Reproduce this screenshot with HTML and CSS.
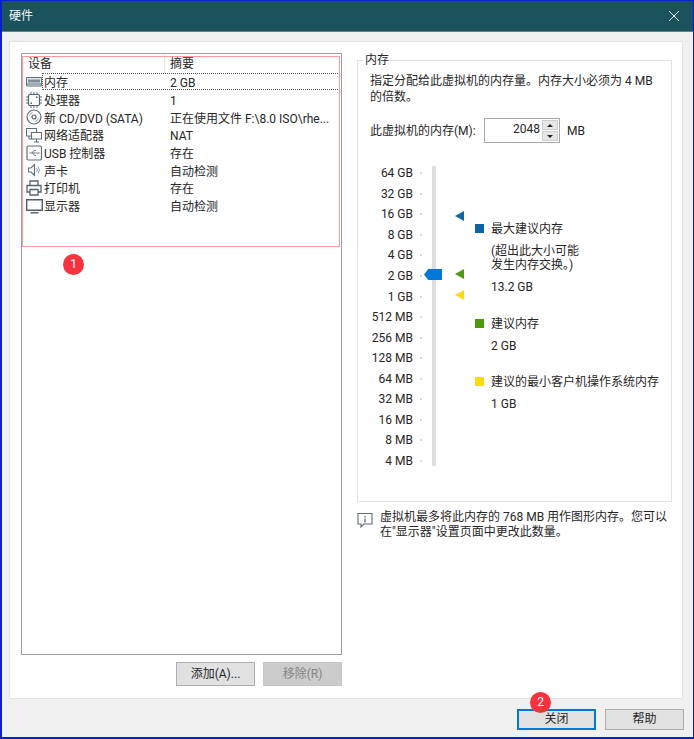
FILE: index.html
```html
<!DOCTYPE html>
<html lang="zh-CN">
<head>
    <meta charset="UTF-8">
    <title>硬件</title>
    <link rel="stylesheet" href="styles.css">
</head>
<body>
<div class="window">
    <div class="titlebar">
        <span>硬件</span>
        <svg class="close-x" width="12" height="12" viewBox="0 0 12 12"><path d="M1 1l10 10M11 1L1 11" stroke="#e8eeee" stroke-width="1" fill="none"/></svg>
    </div>

    <div class="panel">
        <div class="left">
            <div class="list">
                <div class="list-head">
                    <div class="head-name">设备</div>
                    <div class="head-sum">摘要</div>
                </div>
                <div class="row">
                    <svg class="ico" viewBox="0 0 16 16"><path d="M.5 3.500h15v8.500H.5z" fill="#e6e9eb" stroke="#5f6e7c"/><path d="M2 5.500h12v3H2z" fill="#7f8b97"/><path d="M1 10h14" stroke="#5f6e7c"/></svg>
                    <div class="cells focus"><span class="c-name">内存</span><span class="c-sum">2 GB</span></div>
                </div>
                <div class="row">
                    <svg class="ico" viewBox="0 0 16 16"><rect x="2.500" y="2.500" width="11" height="11" rx="1.500" fill="none" stroke="#4f5e6c" stroke-width="1.200"/><path d="M5 0v2.500M8 0v2.500M11 0v2.500M5 13.500V16M8 13.500V16M11 13.500V16M0 5h2.500M0 8h2.500M0 11h2.500M13.500 5H16M13.500 8H16M13.500 11H16" stroke="#5f6e7c"/><path d="M4.500 10.500h1.500V12H4.500zM10 4.500h1.500V6H10z" fill="#4f5e6c"/></svg>
                    <div class="cells"><span class="c-name">处理器</span><span class="c-sum">1</span></div>
                </div>
                <div class="row">
                    <svg class="ico" viewBox="0 0 16 16"><circle cx="8" cy="8" r="7" fill="none" stroke="#5f6e7c" stroke-width="1.200"/><circle cx="8" cy="8" r="2" fill="none" stroke="#4f5e6c" stroke-width="1.200"/><path d="M3.500 6.500a5 5 0 0 1 3-3M12.500 9.500a5 5 0 0 1-3 3" fill="none" stroke="#8c98a3"/></svg>
                    <div class="cells"><span class="c-name">新 CD/DVD (SATA)</span><span class="c-sum">正在使用文件 F:\8.0 ISO\rhe...</span></div>
                </div>
                <div class="row">
                    <svg class="ico" viewBox="0 0 16 16"><path d="M.5 1.500h10v7.500H.5z" fill="#fff" stroke="#5f6e7c" stroke-width="1.100"/><path d="M5.500 5.500h10v6.500h-10z" fill="#fff" stroke="#5f6e7c" stroke-width="1.100"/><path d="M10.500 12v3M8 15h5M3 9v3h2.500" fill="none" stroke="#5f6e7c"/></svg>
                    <div class="cells"><span class="c-name">网络适配器</span><span class="c-sum">NAT</span></div>
                </div>
                <div class="row">
                    <svg class="ico" viewBox="0 0 16 16"><rect x="1" y="1" width="14.500" height="14" rx="1.500" fill="none" stroke="#5f6e7c" stroke-width="1.200"/><path d="M3.500 8h9M6 8l2-2.500h2M6.500 8l2 2.500h1.500" fill="none" stroke="#6d7a86"/><path d="M12.500 7v2l1.500-1z" fill="#6d7a86"/></svg>
                    <div class="cells"><span class="c-name">USB 控制器</span><span class="c-sum">存在</span></div>
                </div>
                <div class="row">
                    <svg class="ico" viewBox="0 0 16 16"><path d="M2.500 6h2.500l3.500-3.500v11L5 10H2.500z" fill="none" stroke="#5f6e7c" stroke-width="1.100"/><path d="M10.500 6a3 3 0 0 1 0 4M12 4.500a5.500 5.500 0 0 1 0 7" fill="none" stroke="#8c98a3"/></svg>
                    <div class="cells"><span class="c-name">声卡</span><span class="c-sum">自动检测</span></div>
                </div>
                <div class="row">
                    <svg class="ico" viewBox="0 0 16 16"><path d="M4 5.500v-4.500h8v4.500M4 12H1V5.500h14V12h-3M4 9.500h8V15H4z" fill="none" stroke="#56646f" stroke-width="1.300"/></svg>
                    <div class="cells"><span class="c-name">打印机</span><span class="c-sum">存在</span></div>
                </div>
                <div class="row">
                    <svg class="ico ico-wide" viewBox="0 0 17 16"><path d="M.7 1.700h15.600v10.600H.7z" fill="#fff" stroke="#4f5e6c" stroke-width="1.400"/><path d="M4.500 14.800h8" stroke="#4f5e6c" stroke-width="1.400"/></svg>
                    <div class="cells"><span class="c-name">显示器</span><span class="c-sum">自动检测</span></div>
                </div>
            </div>
            <div class="list-buttons">
                <div class="btn">添加(A)...</div>
                <div class="btn btn-off">移除(R)</div>
            </div>
            <div class="mark-rect"></div>
        </div>

        <div class="right">
            <fieldset class="group">
                <legend>内存</legend>
                <p class="desc">指定分配给此虚拟机的内存量。内存大小必须为 4 MB 的倍数。</p>
                <div class="amount">
                    <span class="amount-label">此虚拟机的内存(M):</span>
                    <div class="spin">
                        <div class="spin-val">2048</div>
                        <div class="spin-btns">
                            <div class="spin-btn"><i class="up"></i></div>
                            <div class="spin-btn"><i class="down"></i></div>
                        </div>
                    </div>
                    <span class="amount-unit">MB</span>
                </div>
                <div class="chart">
                    <div class="scale">
                        <div class="tick">64 GB</div>
                        <div class="tick">32 GB</div>
                        <div class="tick">16 GB</div>
                        <div class="tick">8 GB</div>
                        <div class="tick">4 GB</div>
                        <div class="tick">2 GB</div>
                        <div class="tick">1 GB</div>
                        <div class="tick">512 MB</div>
                        <div class="tick">256 MB</div>
                        <div class="tick">128 MB</div>
                        <div class="tick">64 MB</div>
                        <div class="tick">32 MB</div>
                        <div class="tick">16 MB</div>
                        <div class="tick">8 MB</div>
                        <div class="tick">4 MB</div>
                    </div>
                    <div class="slider">
                        <div class="track"></div>
                        <div class="thumb"></div>
                        <div class="arrow arrow-max"></div>
                        <div class="arrow arrow-rec"></div>
                        <div class="arrow arrow-min"></div>
                    </div>
                    <div class="legend">
                        <div class="leg-name"><i class="sq sq-blue"></i>最大建议内存</div>
                        <div class="leg-note">(超出此大小可能发生内存交换。)</div>
                        <div class="leg-val">13.2 GB</div>
                        <div class="leg-name leg-gap"><i class="sq sq-green"></i>建议内存</div>
                        <div class="leg-val">2 GB</div>
                        <div class="leg-name leg-gap"><i class="sq sq-yellow"></i>建议的最小客户机操作系统内存</div>
                        <div class="leg-val">1 GB</div>
                    </div>
                </div>
            </fieldset>
            <div class="info">
                <svg class="info-ico" width="16" height="16" viewBox="0 0 16 16"><path d="M1 1.500h14v10.500H7l-3 3v-3H1z" fill="none" stroke="#5d6b78" stroke-width="1.100"/><path d="M8 4v1.500M8 6.500v4" stroke="#5d6b78" stroke-width="1.300"/></svg>
                <p>虚拟机最多将此内存的 768 MB 用作图形内存。您可以在"显示器"设置页面中更改此数量。</p>
            </div>
        </div>
    </div>

    <div class="footer">
        <div class="btn btn-foot btn-default">关闭</div>
        <div class="btn btn-foot">帮助</div>
    </div>

    <div class="badge badge-1">1</div>
    <div class="badge badge-2">2</div>
</div>
</body>
</html>
```

FILE: styles.css
```css
* {
    box-sizing: border-box;
}
html, body {
    margin: 0;
    padding: 0;
}
body {
    font-family: Roboto, "Noto Sans CJK SC", sans-serif;
    font-size: 12px;
    line-height: 16px;
    color: #262626;
}
p {
    margin: 0;
}
.window {
    position: relative;
    display: flex;
    flex-direction: column;
    width: 694px;
    height: 739px;
    background: #f0f0f0;
    border: 1px solid #0a1ed2;
    border-left-width: 2px;
    border-bottom-width: 2px;
}
.titlebar {
    display: flex;
    align-items: center;
    justify-content: space-between;
    height: 31px;
    padding: 0 13px 0 7px;
    background: #1b535c;
    border-bottom: 1px solid #5d8288;
    color: #f2f5f5;
}

/* main white area */
.panel {
    display: flex;
    gap: 15px;
    height: 658px;
    margin: 9px 10px 0 7px;
    padding: 11px 10px 11px 11px;
    background: #fff;
    border: 1px solid #e3e3e3;
}
.left {
    position: relative;
    width: 321px;
}
.list {
    height: 602px;
    background: #fff;
    border: 1px solid #a0a0a0;
}
.list-head {
    display: flex;
    height: 19px;
    line-height: 21px;
}
.head-name {
    width: 143px;
    padding-left: 6px;
    border-right: 1px solid #e5e5e5;
}
.head-sum {
    padding-left: 5px;
}
.row {
    display: flex;
    align-items: center;
    height: 17.7px;
    padding-left: 4px;
}
.ico {
    flex: none;
    width: 16px;
    height: 16px;
}
.ico-wide {
    width: 17px;
    margin-right: -1px;
}
.cells {
    display: flex;
    width: 298px;
    height: 17px;
    padding-left: 2px;
    line-height: 20px;
    white-space: nowrap;
}
.focus {
    outline: 1px dotted #555;
    outline-offset: -1px;
}
.c-name {
    width: 126px;
}
.list-buttons {
    display: flex;
    justify-content: flex-end;
    gap: 8px;
    margin-top: 7px;
}
.btn {
    width: 79px;
    height: 24px;
    line-height: 22px;
    text-align: center;
    background: #e1e1e1;
    border: 1px solid #adadad;
}
.btn-off {
    background: #ccc;
    border-color: #c6c6c6;
    color: #858585;
}
.mark-rect {
    position: absolute;
    left: 1px;
    top: 3px;
    width: 318px;
    height: 191px;
    border: 1px solid #ff9a9a;
    pointer-events: none;
}

/* right side */
.right {
    width: 315px;
}
.group {
    margin: 0;
    padding: 6px 0 0;
    height: 449px;
    border: 1px solid #e3e3e3;
}
.group legend {
    margin-left: 6px;
    padding: 0 1px;
    line-height: 14px;
}
.desc {
    width: 296px;
    margin-left: 12px;
}
.amount {
    display: flex;
    align-items: center;
    margin: 13px 0 0 12px;
}
.amount-label {
    width: 114px;
}
.spin {
    display: flex;
    width: 76px;
    height: 25px;
    padding: 1px;
    background: #fff;
    border: 1px solid #a9a9a9;
}
.spin-val {
    flex: 1;
    padding-right: 2px;
    line-height: 19px;
    text-align: right;
}
.spin-btns {
    display: flex;
    flex-direction: column;
    gap: 1px;
    width: 16px;
}
.spin-btn {
    display: flex;
    flex: 1;
    align-items: center;
    justify-content: center;
    background: #e6e6e6;
    border: 1px solid #cfcfcf;
}
.spin-btn i {
    width: 0;
    height: 0;
    border-left: 3px solid transparent;
    border-right: 3px solid transparent;
}
.spin-btn .up {
    border-bottom: 3px solid #222;
}
.spin-btn .down {
    border-top: 3px solid #222;
}
.amount-unit {
    margin-left: 7px;
}
.chart {
    display: flex;
    height: 300px;
    margin-top: 23px;
}
.scale {
    width: 65px;
    margin-top: -3px;
}
.tick {
    display: flex;
    align-items: center;
    justify-content: flex-end;
    height: 20.55px;
    white-space: nowrap;
}
.tick::after {
    content: "";
    width: 2px;
    height: 2px;
    margin: 0 1px 0 7px;
    background: #d9d9d9;
}
.slider {
    position: relative;
    flex: none;
    width: 52px;
}
.track {
    width: 4px;
    height: 300px;
    margin-left: 9px;
    background: #dcdfe0;
}
.thumb {
    position: absolute;
    left: 1px;
    top: 103px;
    width: 18px;
    height: 11px;
    background: #0078d7;
    clip-path: polygon(0 50%, 24% 0, 100% 0, 100% 100%, 24% 100%);
}
.arrow {
    position: absolute;
    left: 32px;
    width: 9px;
    height: 10px;
    clip-path: polygon(0 50%, 100% 0, 100% 100%);
}
.arrow-max {
    top: 45px;
    background: #0f67a8;
}
.arrow-rec {
    top: 103px;
    background: #4e9a14;
}
.arrow-min {
    top: 124px;
    background: #ffd911;
}
.legend {
    flex: 1;
    padding: 55px 0 0 16px;
}
.leg-name {
    position: relative;
    white-space: nowrap;
}
.sq {
    position: absolute;
    left: -16px;
    top: 3px;
    width: 9px;
    height: 9px;
}
.sq-blue {
    background: #0b63a8;
}
.sq-green {
    background: #4c9a0c;
}
.sq-yellow {
    background: #ffdb0d;
}
.leg-note {
    width: 94px;
    margin-top: 7px;
    line-height: 14px;
}
.leg-val {
    margin-top: 7px;
}
.leg-gap {
    margin-top: 21px;
}
.leg-gap + .leg-val {
    margin-top: 6px;
}
.leg-gap + .leg-val + .leg-gap {
    margin-top: 20px;
}
.info {
    display: flex;
    margin: 8px 0 0;
}
.info-ico {
    flex: none;
    margin: 2px 7px 0 0;
}
.info p {
    width: 292px;
    line-height: 15px;
}

/* bottom buttons */
.footer {
    display: flex;
    justify-content: flex-end;
    gap: 9px;
    padding: 10px 9px 0 0;
}
.btn-foot {
    height: 21px;
    line-height: 19px;
}
.btn-default {
    border: 2px solid #0078d7;
    line-height: 17px;
}

/* numbered callouts */
.badge {
    position: absolute;
    width: 21px;
    height: 21px;
    border-radius: 50%;
    background: #f5333f;
    color: #fff;
    line-height: 21px;
    text-align: center;
}
.badge-1 {
    left: 61px;
    top: 253px;
}
.badge-2 {
    left: 528px;
    top: 691px;
}
.close-x {
    flex: none;
}
```
